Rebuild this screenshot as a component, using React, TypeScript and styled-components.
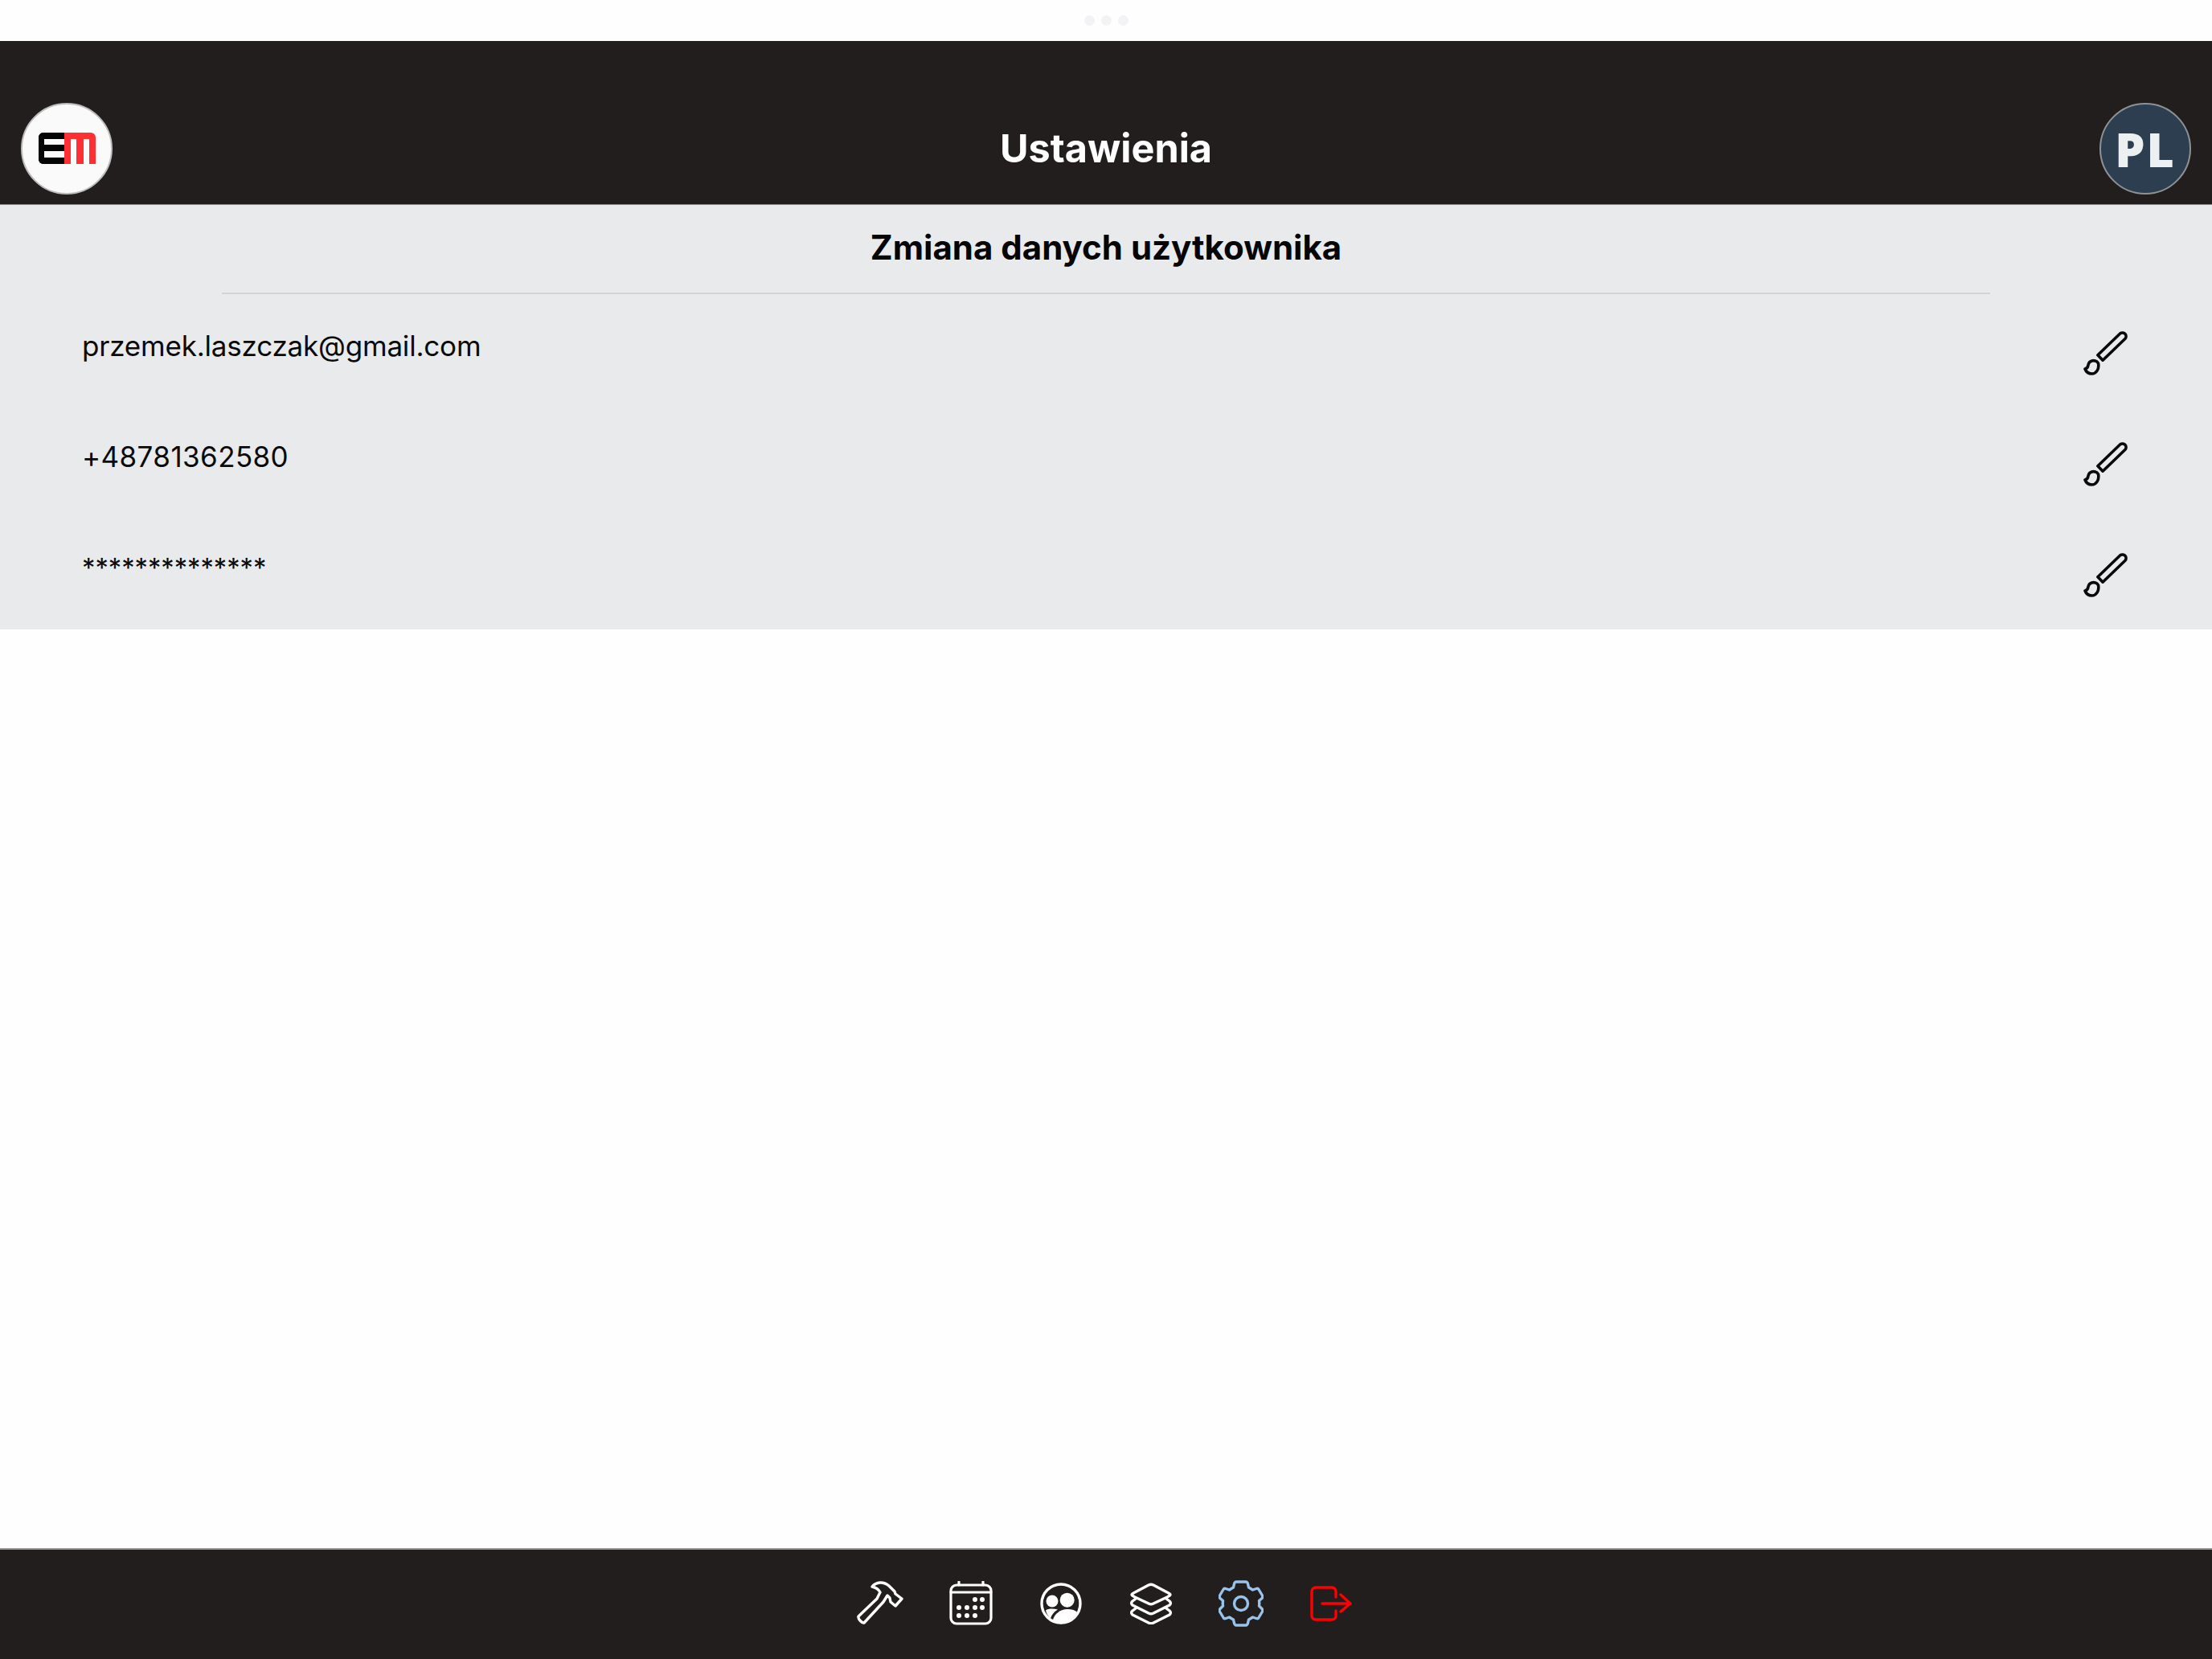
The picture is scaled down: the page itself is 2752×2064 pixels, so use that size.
import styled, { createGlobalStyle } from 'styled-components';

const GlobalStyle = createGlobalStyle`
  html, body {
    margin: 0;
    padding: 0;
    background: #fefefe;
  }
  * {
    box-sizing: border-box;
  }
`;

const rows = [
  { id: 'email', value: 'przemek.laszczak@gmail.com', size: 35, tracking: -0.2 },
  { id: 'phone', value: '+48781362580', size: 35, tracking: 0.4 },
  { id: 'password', value: '**************', size: 32.7, tracking: 0 },
];

function BrushIcon() {
  return (
    <svg width="56" height="56" viewBox="0 0 56 56" fill="none" stroke="#0a0a0a" strokeWidth="3.6" strokeLinejoin="round" strokeLinecap="round">
      <path d="M17.900 29.800L45.900 2.800A4.500 4.500 0 0 1 52.100 9.200L24.100 36.200Z" />
      <path d="M17 38C13 35.500 7 36.500 6 42C5.700 44.500 4.500 46.500 2 47C3.500 51 7 53 10.500 53C16 53 20 47 18.500 40Z" />
    </svg>
  );
}

function HammerIcon() {
  return (
    <svg width="60" height="56" viewBox="0 0 60 56" fill="none" stroke="#fff" strokeWidth="3.4" strokeLinejoin="round" strokeLinecap="round">
      <path d="M2 44L25 22L29 14C27 10 23 8 19 7C24 1 33 0 40 6L47 13L48 16L56 22L48 31L42 26L41 21L38 18L33 26L9 52C7 53 1 47 2 44Z" />
    </svg>
  );
}

function CalendarIcon() {
  const dots = [
    [32, 23], [41, 23],
    [12, 33], [22, 33], [32, 33], [41, 33],
    [12, 43], [22, 43], [32, 43],
  ];
  return (
    <svg width="54" height="56" viewBox="0 0 54 56" fill="none" stroke="#fff" strokeWidth="3.2" strokeLinecap="round">
      <rect x="2" y="5" width="50" height="48" rx="7" />
      <path d="M2 14H52M12 1V5M42 1V5" />
      {dots.map(([cx, cy]) => (
        <circle key={`${cx}-${cy}`} cx={cx} cy={cy} r="3" fill="#fff" stroke="none" />
      ))}
    </svg>
  );
}

function PeopleIcon() {
  return (
    <svg width="52" height="52" viewBox="0 0 52 52" fill="#fff">
      <circle cx="26" cy="26" r="24" fill="none" stroke="#fff" strokeWidth="3.4" />
      <circle cx="15" cy="23" r="7.5" />
      <circle cx="33.700" cy="21.700" r="9" />
      <path d="M16 46C18 39 25 33 34 33C39 33 43 34 46 36.500C42 44 34.500 50 26 50C22 50 19 49 16 46Z" />
      <path d="M7 34.500C10 32 17 32 22 33.500C17 36.500 14.500 40 13 44.500C10 42 8 38.500 7 34.500Z" />
    </svg>
  );
}

function LayersIcon() {
  return (
    <svg width="52" height="52" viewBox="0 0 52 52" fill="none" stroke="#fff" strokeWidth="3.4" strokeLinejoin="round" strokeLinecap="round">
      <path d="M2 15C2 14 4 13 6 12L23 3C25 2 27 2 29 3L46 12C48 13 50 14 50 15C50 16 48 17 46 18L29 26C27 27 25 27 23 26L6 18C4 17 2 16 2 15Z" />
      <path d="M7 20L3 23C1 25 1 26 3 28L23 38C25 39 27 39 29 38L49 28C51 26 51 25 49 23L45 20" />
      <path d="M7 32L3 35C1 37 1 38 3 40L23 50C25 51 27 51 29 50L49 40C51 38 51 37 49 35L45 32" />
    </svg>
  );
}

function GearIcon() {
  return (
    <svg width="56" height="58" viewBox="0 0 56 58" fill="none" stroke="#98c3ec" strokeWidth="3.4" strokeLinejoin="round">
      <path d="M22 2H34C35.500 2 36 3 36.500 4.500L37.500 9C39.500 10 41 11 42.500 12L47 10.500C48.500 10 49.500 10.500 50 11.500L54.500 19C55 20.500 55 21.500 54 22.500L50.500 25.500C50.800 27.500 50.800 30 50.500 32L54 35.500C55 36.500 55 37.500 54.500 39L50 46.500C49.500 47.500 48.500 48 47 47.500L42.500 46C41 47 39.500 48 37.500 49L36.500 53.500C36 55 35.500 56 34 56H22C20.500 56 20 55 19.500 53.500L18.500 49C16.500 48 15 47 13.500 46L9 47.500C7.500 48 6.500 47.500 6 46.500L1.500 39C1 37.500 1 36.500 2 35.500L5.500 32C5.200 30 5.200 27.500 5.500 25.500L2 22.500C1 21.500 1 20.500 1.500 19L6 11.500C6.500 10.500 7.500 10 9 10.500L13.500 12C15 11 16.500 10 18.500 9L19.500 4.500C20 3 20.500 2 22 2Z" />
      <circle cx="28" cy="29" r="8.500" />
    </svg>
  );
}

function ExitIcon() {
  return (
    <svg width="52" height="44" viewBox="0 0 52 44" fill="none" stroke="#fe0000" strokeWidth="3.4" strokeLinejoin="round" strokeLinecap="round">
      <path d="M32 14V7C32 4 30 2 27 2H7C4 2 2 4 2 7V37C2 40 4 42 7 42H27C30 42 32 40 32 37V31" />
      <path d="M15 22H49M38 11L50 22L38 32" />
    </svg>
  );
}

export default function App() {
  return (
    <Page>
      <GlobalStyle />
      <TopStrip>
        <Dot />
        <Dot />
        <Dot />
      </TopStrip>
      <Header>
        <LogoBadge>
          <LogoE />
          <LogoM>
            <LogoLeg />
            <LogoLeg />
          </LogoM>
        </LogoBadge>
        <HeaderTitle>Ustawienia</HeaderTitle>
        <LangBadge>PL</LangBadge>
      </Header>
      <Section>
        <SectionTitle>Zmiana danych użytkownika</SectionTitle>
        <Divider />
        {rows.map((row) => (
          <Row key={row.id}>
            <RowValue $size={row.size} $tracking={row.tracking}>{row.value}</RowValue>
            <EditButton>
              <BrushIcon />
            </EditButton>
          </Row>
        ))}
      </Section>
      <Spacer />
      <Footer>
        <NavItem><HammerIcon /></NavItem>
        <NavItem><CalendarIcon /></NavItem>
        <NavItem><PeopleIcon /></NavItem>
        <NavItem><LayersIcon /></NavItem>
        <NavItem><GearIcon /></NavItem>
        <NavItem><ExitIcon /></NavItem>
      </Footer>
    </Page>
  );
}

const Page = styled.div`
  width: 2752px;
  height: 2064px;
  display: flex;
  flex-direction: column;
  overflow: hidden;
  background: #fefefe;
  font-family: Inter, 'Liberation Sans', sans-serif;
`;

const TopStrip = styled.div`
  height: 51px;
  padding-bottom: 1px;
  display: flex;
  align-items: center;
  justify-content: center;
  gap: 8px;
  background: #fefefe;
`;

const Dot = styled.span`
  width: 13px;
  height: 13px;
  border-radius: 50%;
  background: #f3f3f5;
`;

const Header = styled.header`
  height: 204px;
  padding: 77px 26px 13px;
  display: flex;
  align-items: center;
  justify-content: space-between;
  background: #221e1e;
  border-bottom: 1px solid #8d8c8c;
`;

const HeaderTitle = styled.h1`
  margin: 0;
  font-size: 48.6px;
  font-weight: 700;
  color: #fff;
`;

const LogoBadge = styled.div`
  width: 114px;
  height: 114px;
  border-radius: 50%;
  display: flex;
  align-items: center;
  justify-content: center;
  background: #fafafa;
  border: 2px solid #bdbdbd;
`;

const LogoE = styled.div`
  width: 32px;
  height: 39px;
  border-radius: 6px 0 0 6px;
  background: linear-gradient(
    to bottom,
    #050505 0 8px,
    transparent 8px 15px,
    #050505 15px 23px,
    transparent 23px 31px,
    #050505 31px
  );
  box-shadow: inset 7px 0 0 #050505;
`;

const LogoM = styled.div`
  width: 39px;
  height: 39px;
  padding: 8px 8px 0;
  display: flex;
  justify-content: space-between;
  border-radius: 0 6px 0 0;
  background: #ff2f33;
`;

const LogoLeg = styled.span`
  width: 7px;
  height: 31px;
  background: #fafafa;
`;

const LangBadge = styled.div`
  width: 114px;
  height: 114px;
  border-radius: 50%;
  display: flex;
  align-items: center;
  justify-content: center;
  background: #2c3e50;
  border: 2px solid #8f9295;
  color: #ecf0f1;
  font-size: 59px;
  font-weight: 800;
  letter-spacing: 2px;
  font-family: 'Open Sans', sans-serif;
`;

const Section = styled.section`
  height: 528px;
  display: flex;
  flex-direction: column;
  background: #e9eaec;
`;

const SectionTitle = styled.h2`
  margin: 0;
  height: 109px;
  padding-bottom: 5px;
  display: flex;
  align-items: center;
  justify-content: center;
  font-size: 42px;
  font-weight: 700;
  color: #050505;
`;

const Divider = styled.div`
  height: 2px;
  margin: 0 276px;
  background: #d3d4d6;
`;

const Row = styled.div`
  height: 138px;
  padding: 16px 104px 0 102px;
  display: flex;
  justify-content: space-between;
`;

const RowValue = styled.span<{ $size: number; $tracking: number }>`
  height: 96px;
  line-height: 96px;
  color: #0a0a0a;
  font-size: ${(p) => p.$size}px;
  letter-spacing: ${(p) => p.$tracking}px;
`;

const EditButton = styled.div`
  width: 56px;
  height: 56px;
  margin-top: 30px;
`;

const Spacer = styled.div`
  flex: 1;
  background: #fefefe;
`;

const Footer = styled.footer`
  height: 138px;
  padding-bottom: 2px;
  display: flex;
  align-items: center;
  justify-content: center;
  background: #221e1e;
  border-top: 2px solid #9a9898;
`;

const NavItem = styled.div`
  width: 112px;
  display: flex;
  align-items: center;
  justify-content: center;
`;
